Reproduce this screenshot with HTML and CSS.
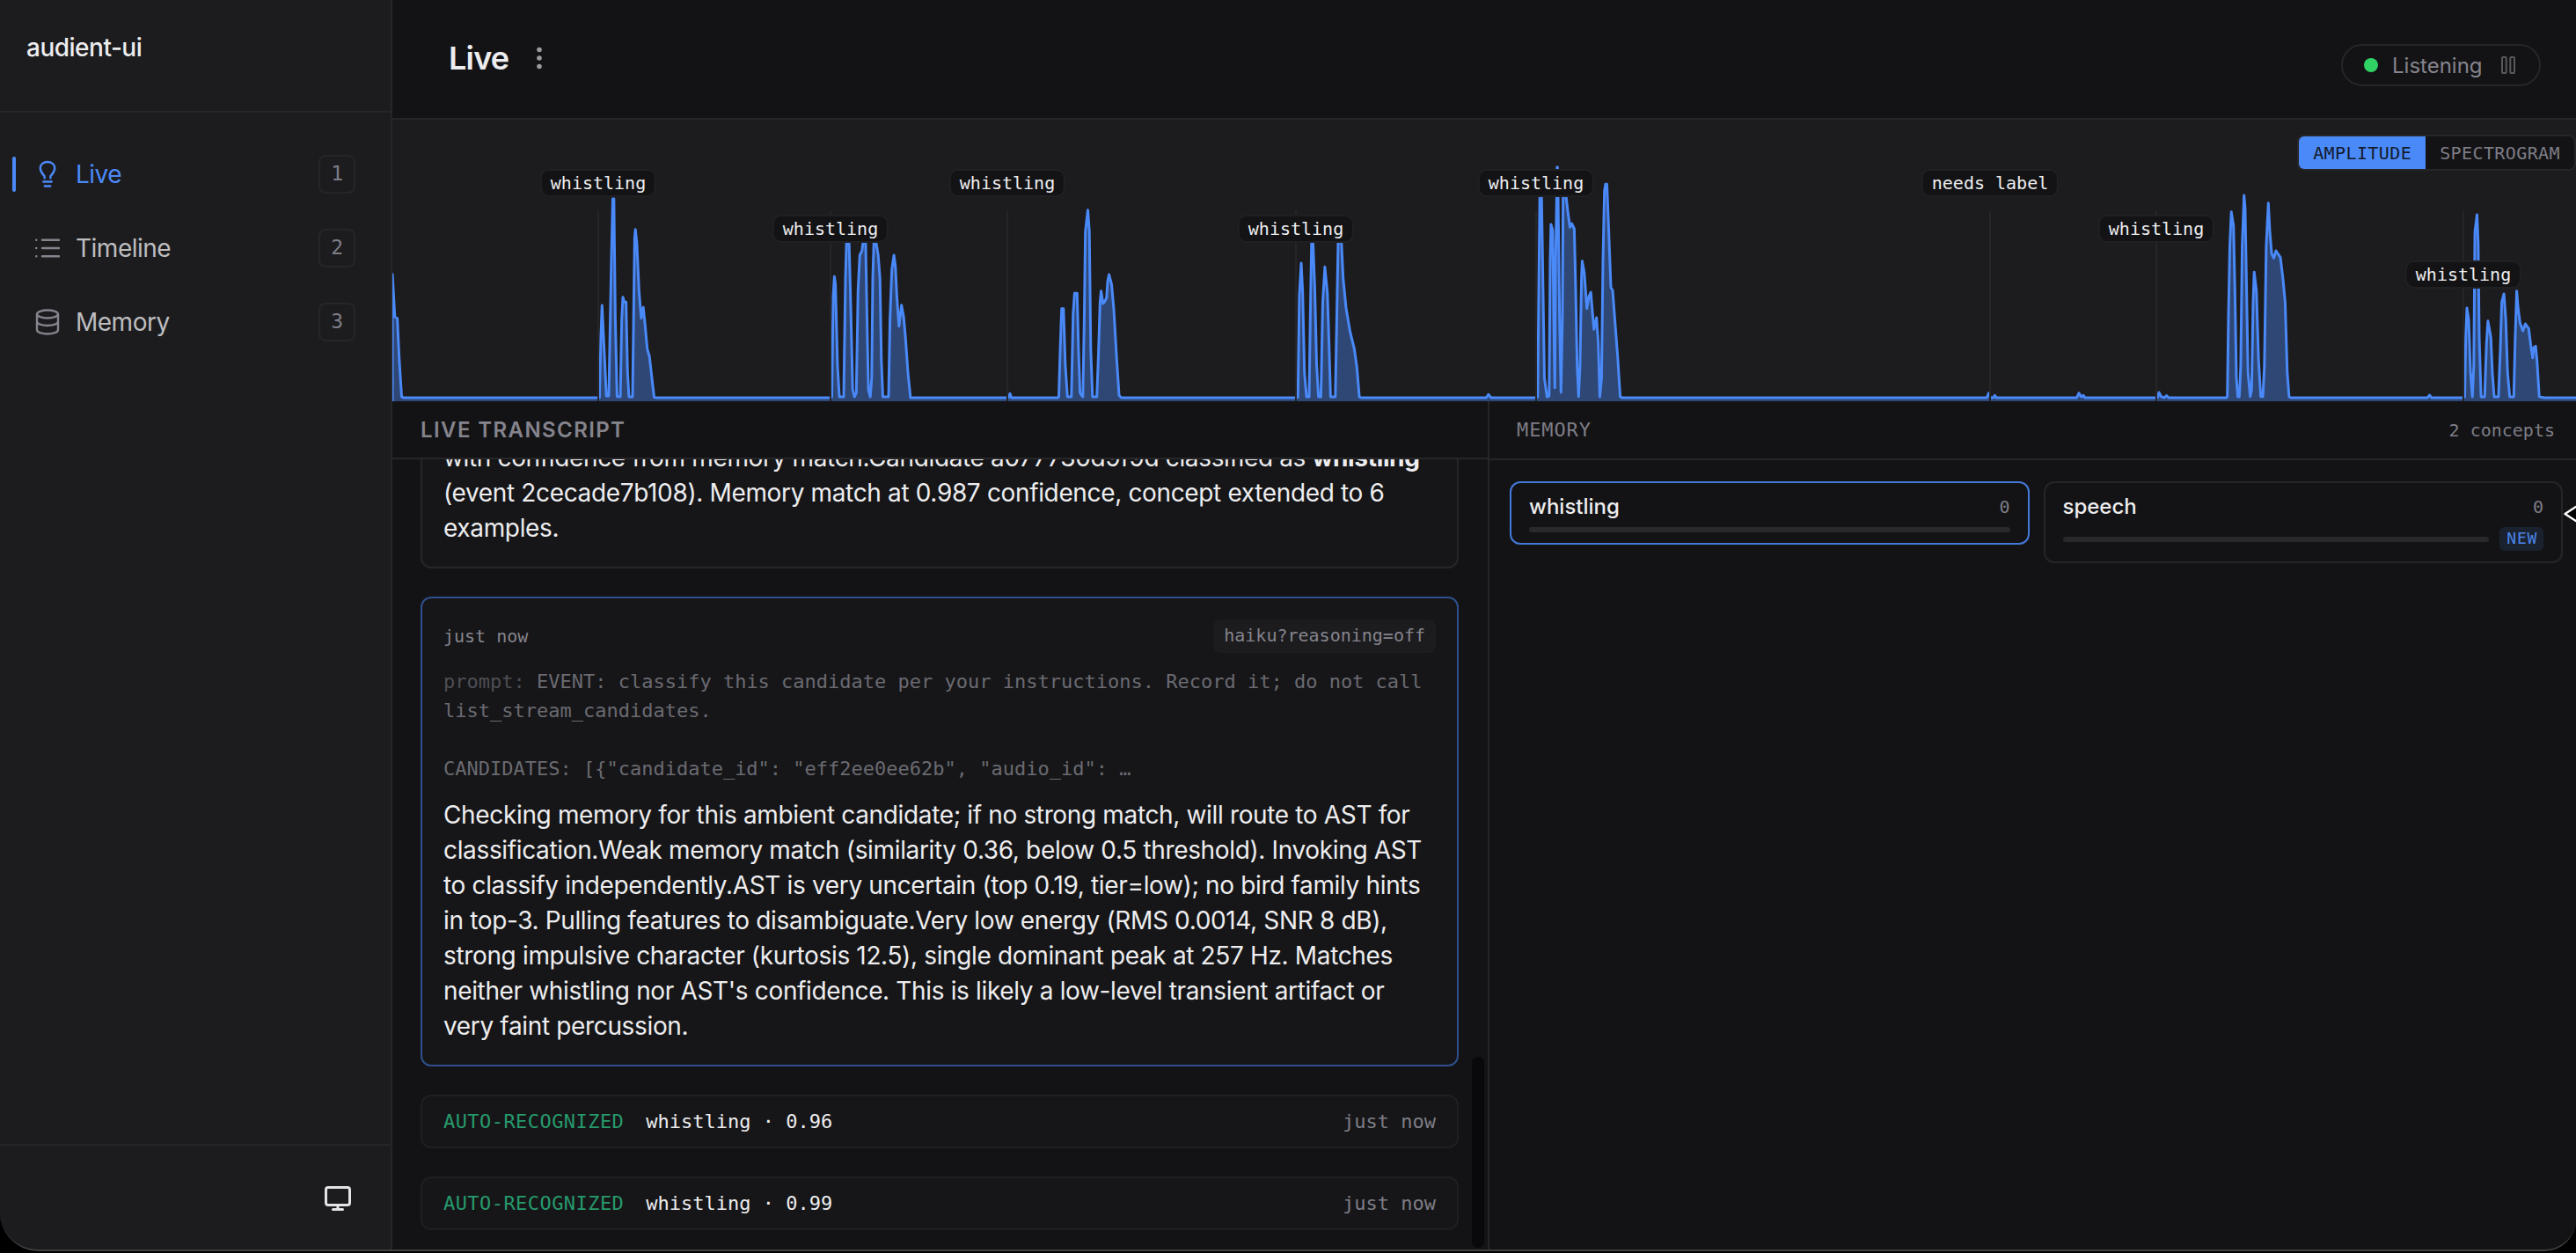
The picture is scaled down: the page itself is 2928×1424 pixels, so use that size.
FILE: index.html
```html
<!DOCTYPE html>
<html lang="en">
<head>
    <meta charset="UTF-8">
    <meta name="viewport" content="width=device-width, initial-scale=1.0">
    <title>audient-ui</title>
    <link rel="stylesheet" href="styles.css">
</head>
<body>
    <div class="window">
        <aside class="sidebar">
            <div class="brand">audient-ui</div>
            <nav class="nav">
                <a class="nav-item active">
                    <svg class="nav-icon" viewBox="0 0 32 32"><path d="M12.6 20.4v-2.2c-1.5-2-4.8-4.2-4.8-9.2C7.8 4.6 11.6 2 16 2s8.2 2.6 8.2 7c0 5-3.300 7.200-4.800 9.200v2.200M11.300 24.500h9.400M12.800 29.500h6.400"/></svg>
                    <span class="nav-label">Live</span>
                    <kbd>1</kbd>
                </a>
                <a class="nav-item">
                    <svg class="nav-icon" viewBox="0 0 32 32"><path d="M10 6.700h19M10 16h19M10 25.300h19M3.200 6.700h.1M3.200 16h.1M3.200 25.300h.1"/></svg>
                    <span class="nav-label">Timeline</span>
                    <kbd>2</kbd>
                </a>
                <a class="nav-item">
                    <svg class="nav-icon" viewBox="0 0 32 32"><ellipse cx="16" cy="7" rx="12" ry="4.500"/><path d="M4 7v18c0 2.500 5.400 4.500 12 4.500s12-2 12-4.500V7M4 15.500c0 2.500 5.400 4.500 12 4.500s12-2 12-4.500"/></svg>
                    <span class="nav-label">Memory</span>
                    <kbd>3</kbd>
                </a>
            </nav>
            <div class="sidebar-footer">
                <svg class="monitor-icon" viewBox="0 0 32 32"><rect x="2.500" y="3.500" width="27" height="20" rx="2.500"/><path d="M16 23.500v5M10.500 28.500h11"/></svg>
            </div>
        </aside>

        <main class="main">
            <header class="topbar">
                <h1>Live</h1>
                <svg class="dots" viewBox="0 0 8 28"><circle cx="4" cy="4.500" r="2.800"/><circle cx="4" cy="14" r="2.800"/><circle cx="4" cy="23.500" r="2.800"/></svg>
                <div class="status">
                    <span class="status-dot"></span>
                    <span>Listening</span>
                    <svg class="pause-icon" viewBox="0 0 16 20"><rect x="1" y="1" width="4.700" height="18" rx="1"/><rect x="10.300" y="1" width="4.700" height="18" rx="1"/></svg>
                </div>
            </header>

            <section class="wave">
                <svg class="wave-chart" viewBox="0 0 2482 320">
                    <path d="M0,322 L0,175.700 2.800,224 5.600,225.700 7.700,270.700 10.500,315 13,316
                        235.400,316 237,247 238.300,211 240.700,260.700 243.200,314 246,314 248.900,160.700 250.500,90 251.800,90 253.400,227 255.400,314.700 259.100,314.700 260.700,227 262,201.700 263.600,207.300 265.600,207.300 267.300,287 268.900,315 273,315 274.600,194 275.400,134 276.200,124.700 277.900,140.700 280.300,194 282.800,225.700 285.200,213.300 287.300,234 289.700,260.700 292.200,269 294.600,290.700 297.500,315.300 299,316
                        498.500,316 499.500,315 501.100,200.700 502.400,178.300 503.600,187 506,280.700 508.100,315 513,315 515,180.700 516.200,139 519.100,139 520.700,200.700 523.200,307 525.200,315 527.300,310.700 529.300,194 531.300,154 533.800,149 535,139 537.900,139 539.500,227 541.100,307 543.200,315 544.800,294 546,180.700 547.300,139 549.700,139 552.200,154 554.200,180.700 555.800,274 557.500,315 564,315 565.600,227 567.700,170.700 570.100,154 571.800,167.300 573.400,200.700 575.800,234.700 578.700,210.700 581.100,224 583.200,247.300 586,287.300 588.900,316
                        700.300,316 702,311.300 703.600,316
                        756.500,316 757.500,315 759.100,260.700 760.700,214.700 762.800,214.700 764.800,277.300 767.300,315 771.800,315 773.800,220.700 775.400,197.300 778.300,197.300 779.900,260.700 781.600,310.700 784.800,315 786.400,227.300 787.700,127.300 790.500,102.700 792.200,127.300 793.800,260.700 795.800,315 800.700,315 802.400,270.700 804.400,207.300 805.600,194.700 807.700,209 809.300,207.300 811.800,202.300 813,184 814.600,176 817.500,187.300 819.900,214 823.200,270.700 826,313.300 828.500,316
                        1028.300,316 1029.300,315 1030.900,200.700 1033,163 1034.600,194 1036.700,287.300 1039.100,315 1042,315 1043.600,207.300 1044.800,139 1046.400,139 1048.500,194 1050.500,277.300 1052.600,315 1055.400,315 1057.500,207.300 1059.900,167.300 1062.800,197.300 1064.800,260.700 1066.400,315 1071.800,315 1073.400,227.300 1075,139 1078.700,139 1080.700,180.700 1084,214 1088.500,240.700 1093.400,260.700 1096.200,280.700 1099.100,315 1101,316
                        1243.400,316 1245.800,312.300 1248.700,316
                        1300.800,316 1301.800,315 1303.400,160.700 1304.200,87 1306.200,87 1307.900,194 1309.500,294 1312.400,315 1314.800,314 1316,160.700 1316.900,119 1318.900,125.700 1320.100,227 1321.300,304.700 1322.200,160.700 1323.400,87 1323.800,54 1324.400,54 1325,87 1326.700,227 1328.300,310 1329.900,227 1330.700,87 1334,87 1336.400,107.300 1338.500,122.300 1340.500,118 1343.400,124 1345,194 1346.700,280.700 1348.300,314.700 1349.900,280.700 1351.600,180.700 1352.400,160.700 1354.800,174 1357.700,214.700 1360.100,200.700 1362.200,196 1364.200,220.700 1365.800,238.300 1368.700,225 1370.700,254 1372.400,315 1374.400,294 1376,160.700 1377.700,80.700 1378.900,73.300 1380.500,73.300 1382.600,127.300 1385,190.700 1387,194 1389.500,227.300 1392.800,270.700 1395.600,315 1398,316
                        1812.400,316 1814.400,310.700 1816.400,316 1819.700,316 1821.300,313.300 1823.400,316
                        1914.600,316 1917,310.700 1919.500,315 1922,313.300 1924,316
                        2006.300,316 2008,310 2010.400,314.700 2014.200,316 2016.600,313.700 2019.100,316
                        2084.700,316 2085.700,315 2086.900,227.300 2088.500,144 2090.200,104.700 2092.700,120.700 2094.300,194 2096,294 2097.600,315 2099.300,315 2100.900,280.700 2102.600,144 2104.700,86 2105.900,100.700 2107.600,194 2109.200,287.300 2111.700,314.700 2113.300,307.300 2115,207.300 2116.200,173.300 2118.700,194 2121.200,274 2123.700,314.700 2126.100,314.700 2127.800,280.700 2129.900,144 2132.300,94.700 2134,127.300 2136.100,152.300 2138.500,157.300 2141,149 2143.100,152.300 2146,156.700 2148.900,180.700 2151.400,207.300 2153.800,287.300 2155.900,315 2158,316
                        2313.300,316 2315.400,313 2317.900,316
                        2354.500,316 2355.500,315 2356.700,247.300 2358,214 2360,227.300 2362.100,287.300 2364.200,315 2365.800,280.700 2367.100,127.300 2369.500,108 2370.800,140.700 2372,247.300 2374.100,315 2378.200,315 2380.300,254 2381.900,228.700 2385.200,247.300 2386.900,287.300 2389,315 2393.900,315 2396,260.700 2397.600,207.300 2400.100,198 2402.200,227.300 2404.200,287.300 2406.700,315 2411.300,315 2412.900,247.300 2414.600,194.700 2416.200,214 2418.300,230.700 2421.600,240 2424.500,232 2428.200,237.300 2430.700,257.300 2432.800,270.700 2434,259 2436.100,257.300 2437.700,274 2440.200,314.700 2445.600,316
                        2486,316 2486,322"/>
                </svg>
                <div class="marker" style="left: 233px"><span>whistling</span></div>
                <div class="marker level-1" style="left: 497px"><span>whistling</span></div>
                <div class="marker" style="left: 698px"><span>whistling</span></div>
                <div class="marker level-1" style="left: 1026px"><span>whistling</span></div>
                <div class="marker" style="left: 1299px"><span>whistling</span></div>
                <div class="marker" style="left: 1815px"><span>needs label</span></div>
                <div class="marker level-1" style="left: 2004px"><span>whistling</span></div>
                <div class="marker level-2" style="left: 2353px"><span>whistling</span></div>
                <div class="toggle">
                    <button class="on">AMPLITUDE</button>
                    <button>SPECTROGRAM</button>
                </div>
            </section>

            <div class="panels">
                <section class="transcript">
                    <h2>LIVE TRANSCRIPT</h2>
                    <div class="feed">
                        <article class="card">
                            <p class="body">with confidence from memory match.Candidate a077730d9f9d classified as <strong>whistling</strong> (event 2cecade7b108). Memory match at 0.987 confidence, concept extended to 6 examples.</p>
                        </article>
                        <article class="card current">
                            <div class="meta">
                                <time>just now</time>
                                <span class="model">haiku?reasoning=off</span>
                            </div>
                            <pre class="prompt"><span>prompt:</span> EVENT: classify this candidate per your instructions. Record it; do not call list_stream_candidates.

CANDIDATES: [{"candidate_id": "eff2ee0ee62b", "audio_id": …</pre>
                            <p class="body">Checking memory for this ambient candidate; if no strong match, will route to AST for classification.Weak memory match (similarity 0.36, below 0.5 threshold). Invoking AST to classify independently.AST is very uncertain (top 0.19, tier=low); no bird family hints in top-3. Pulling features to disambiguate.Very low energy (RMS 0.0014, SNR 8 dB), strong impulsive character (kurtosis 12.5), single dominant peak at 257 Hz. Matches neither whistling nor AST's confidence. This is likely a low-level transient artifact or very faint percussion.</p>
                        </article>
                        <article class="card auto">
                            <span class="tag">AUTO-RECOGNIZED</span>
                            <span>whistling · 0.96</span>
                            <time>just now</time>
                        </article>
                        <article class="card auto">
                            <span class="tag">AUTO-RECOGNIZED</span>
                            <span>whistling · 0.99</span>
                            <time>just now</time>
                        </article>
                    </div>
                    <div class="scroll-thumb"></div>
                </section>

                <section class="memory">
                    <div class="memory-head">
                        <span class="memory-title">MEMORY</span>
                        <span class="memory-count">2 concepts</span>
                    </div>
                    <div class="concepts">
                        <div class="concept selected">
                            <div class="concept-row"><span>whistling</span><span class="count">0</span></div>
                            <div class="concept-row"><div class="bar"></div></div>
                        </div>
                        <div class="concept">
                            <div class="concept-row"><span>speech</span><span class="count">0</span></div>
                            <div class="concept-row"><div class="bar"></div><span class="new">NEW</span></div>
                        </div>
                    </div>
                    <svg class="cursor" viewBox="0 0 14 26"><path d="M20,1 L1.500,13 20,25z"/></svg>
                </section>
            </div>
        </main>
    </div>
</body>
</html>
```
FILE: styles.css
```css
* {
    box-sizing: border-box;
}
body {
    margin: 0;
    height: 1424px;
    overflow: hidden;
    background: #000;
    color: #ededef;
    font-family: Inter, "Liberation Sans", sans-serif;
    font-size: 28px;
}
h1, h2, p, pre {
    margin: 0;
}
svg {
    display: block;
    fill: none;
    stroke: currentColor;
    stroke-linecap: round;
    stroke-linejoin: round;
}
kbd, time, pre, .marker, .toggle button, .model, .auto, .memory-head, .count, .new {
    font-family: "DejaVu Sans Mono", monospace;
}
.window {
    display: flex;
    height: 1422px;
    border-bottom: 2px solid #3f3f42;
    border-radius: 0 0 36px 44px;
    overflow: hidden;
    background: #131315;
}

/* sidebar */
.sidebar {
    display: flex;
    flex-direction: column;
    width: 446px;
    flex: none;
    background: #1c1c1e;
    border-right: 2px solid #262629;
}
.brand {
    height: 128px;
    padding: 37px 30px 0;
    font-size: 28px;
    font-weight: 500;
    line-height: 34px;
    letter-spacing: -0.5px;
    border-bottom: 2px solid #262629;
}
.nav {
    flex: 1;
    display: flex;
    flex-direction: column;
    gap: 20px;
    padding: 38px 40px 0 14px;
}
.nav-item {
    display: flex;
    align-items: center;
    height: 64px;
    color: #bdbdc0;
    font-size: 28px;
    letter-spacing: -0.5px;
}
.nav-item::before {
    content: "";
    width: 4px;
    height: 40px;
    border-radius: 2px;
    margin-right: 20px;
}
.nav-item.active {
    color: #4b89f8;
}
.nav-item.active::before {
    background: #4b89f8;
}
.nav-icon {
    width: 32px;
    height: 32px;
    margin-right: 16px;
    stroke-width: 2.4;
    color: #85848d;
}
.active .nav-icon {
    color: #4b89f8;
}
.nav-label {
    flex: 1;
}
kbd {
    width: 42px;
    height: 44px;
    border: 2px solid #262629;
    border-radius: 8px;
    color: #7e7d86;
    font-size: 23px;
    line-height: 39px;
    text-align: center;
}
.sidebar-footer {
    height: 120px;
    padding: 44px 44px 0 0;
    border-top: 2px solid #262629;
    color: #e4e4e7;
}
.monitor-icon {
    width: 32px;
    height: 32px;
    margin-left: auto;
    stroke-width: 3;
}

/* top bar */
.main {
    display: flex;
    flex-direction: column;
    flex: 1;
    min-width: 0;
}
.topbar {
    display: flex;
    height: 136px;
    padding: 0 40px 0 64px;
    border-bottom: 2px solid #262629;
}
h1 {
    padding-top: 44px;
    font-size: 36px;
    font-weight: 600;
    line-height: 44px;
    letter-spacing: -0.8px;
}
.dots {
    width: 8px;
    height: 28px;
    margin: 52px 0 0 31px;
    fill: #9a9aa0;
    stroke: none;
}
.status {
    display: flex;
    align-items: center;
    width: 227px;
    height: 48px;
    margin: 50px 0 0 auto;
    padding: 0 27px 0 24px;
    border: 2px solid #262629;
    border-radius: 24px;
    color: #85848d;
    font-size: 24px;
}
.status-dot {
    width: 16px;
    height: 16px;
    margin-right: 16px;
    border-radius: 50%;
    background: #30d165;
}
.pause-icon {
    width: 16px;
    height: 20px;
    margin-left: auto;
    color: #58585d;
    stroke-width: 2;
}

/* waveform */
.wave {
    position: relative;
    height: 320px;
    flex: none;
    overflow: hidden;
    background: #1c1c1e;
}
.wave-chart {
    width: 2482px;
    height: 320px;
    fill: rgba(74, 137, 248, 0.4);
    stroke: #4a89f8;
    stroke-width: 3;
}
.marker {
    position: absolute;
    top: 104px;
    bottom: 0;
    width: 0;
    border-left: 2px solid #262629;
}
.marker span {
    position: absolute;
    top: -48px;
    left: -1px;
    transform: translateX(-50%);
    height: 32px;
    padding: 0 10px;
    border: 2px solid #202023;
    border-radius: 10px;
    background: #131315;
    font-size: 20px;
    line-height: 28px;
    white-space: nowrap;
}
.marker.level-1 span {
    top: 4px;
}
.marker.level-2 span {
    top: 56px;
}
.toggle {
    position: absolute;
    top: 17px;
    right: 0;
    display: flex;
    height: 41px;
    border: 2px solid #262629;
    border-radius: 8px;
    overflow: hidden;
}
.toggle button {
    padding: 0 16px;
    border: none;
    background: #131315;
    color: #7e7d86;
    font-size: 20px;
    letter-spacing: 0.4px;
}
.toggle button.on {
    background: #4a89f8;
    color: #131a2a;
}

/* transcript */
.panels {
    display: flex;
    flex: 1;
    min-height: 0;
}
.transcript {
    position: relative;
    display: flex;
    flex-direction: column;
    width: 1247px;
    border-right: 2px solid #262629;
}
h2 {
    flex: none;
    height: 66px;
    padding: 18px 32px 0;
    border-bottom: 2px solid #262629;
    color: #85848d;
    font-size: 24px;
    font-weight: 600;
    line-height: 30px;
    letter-spacing: 1.4px;
}
.feed {
    flex: 1;
    min-height: 0;
    display: flex;
    flex-direction: column;
    justify-content: flex-end;
    gap: 32px;
    padding: 0 33px 22px 32px;
    overflow: hidden;
}
.card {
    flex: none;
    padding: 24px;
    border: 2px solid #262629;
    border-radius: 12px;
    background: #161618;
}
.card.current {
    border-color: #2f4f8c;
}
.meta {
    display: flex;
    justify-content: space-between;
    align-items: center;
    height: 38px;
    color: #85848d;
    font-size: 20px;
}
.model {
    height: 38px;
    padding: 0 12px;
    border-radius: 8px;
    background: #1c1c1e;
    line-height: 37px;
}
.prompt {
    margin: 16px 0;
    color: #6a6a71;
    font-size: 22px;
    line-height: 33px;
    white-space: pre-wrap;
}
.prompt span {
    color: #4e4e54;
}
.body {
    font-size: 28px;
    line-height: 40px;
    letter-spacing: -0.35px;
}
.auto {
    display: flex;
    align-items: center;
    height: 61px;
    padding: 0 24px;
    border-color: #1f1f22;
    font-size: 22px;
}
.tag {
    margin-right: 25px;
    color: #269a6c;
    letter-spacing: 0.44px;
}
.auto time {
    margin-left: auto;
    color: #7e7d86;
}
.scroll-thumb {
    position: absolute;
    right: 4px;
    bottom: 2px;
    width: 14px;
    height: 217px;
    border-radius: 7px;
    background: #09090b;
}

/* memory */
.memory {
    position: relative;
    flex: 1;
}
.memory-head {
    display: flex;
    justify-content: space-between;
    height: 67px;
    padding: 0 24px 0 31px;
    border-bottom: 2px solid #262629;
    color: #7e7d86;
    font-size: 20px;
    line-height: 66px;
}
.memory-title {
    font-size: 22px;
    letter-spacing: 0.88px;
}
.concepts {
    display: flex;
    align-items: flex-start;
    gap: 16px;
    padding: 24px 15px 0 23px;
}
.concept {
    flex: 1;
    display: flex;
    flex-direction: column;
    gap: 8px;
    padding: 12px 20px;
    border: 2px solid #262629;
    border-radius: 12px;
    font-size: 24px;
    font-weight: 500;
    line-height: 30px;
}
.concept.selected {
    border-color: #4479d8;
}
.concept-row {
    display: flex;
    align-items: center;
    justify-content: space-between;
    gap: 12px;
}
.count {
    color: #7e7d86;
    font-size: 20px;
    font-weight: 400;
}
.bar {
    flex: 1;
    height: 6px;
    border-radius: 3px;
    background: #28282d;
}
.new {
    height: 27px;
    padding: 0 7px 0 8px;
    border-radius: 6px;
    background: #1a2230;
    color: #4b86ea;
    font-size: 18px;
    line-height: 26px;
    letter-spacing: 0.72px;
}
.cursor {
    position: absolute;
    right: 0;
    top: 115px;
    width: 14px;
    height: 26px;
    fill: #000;
    stroke: #fff;
    stroke-width: 2.4;
}
```
